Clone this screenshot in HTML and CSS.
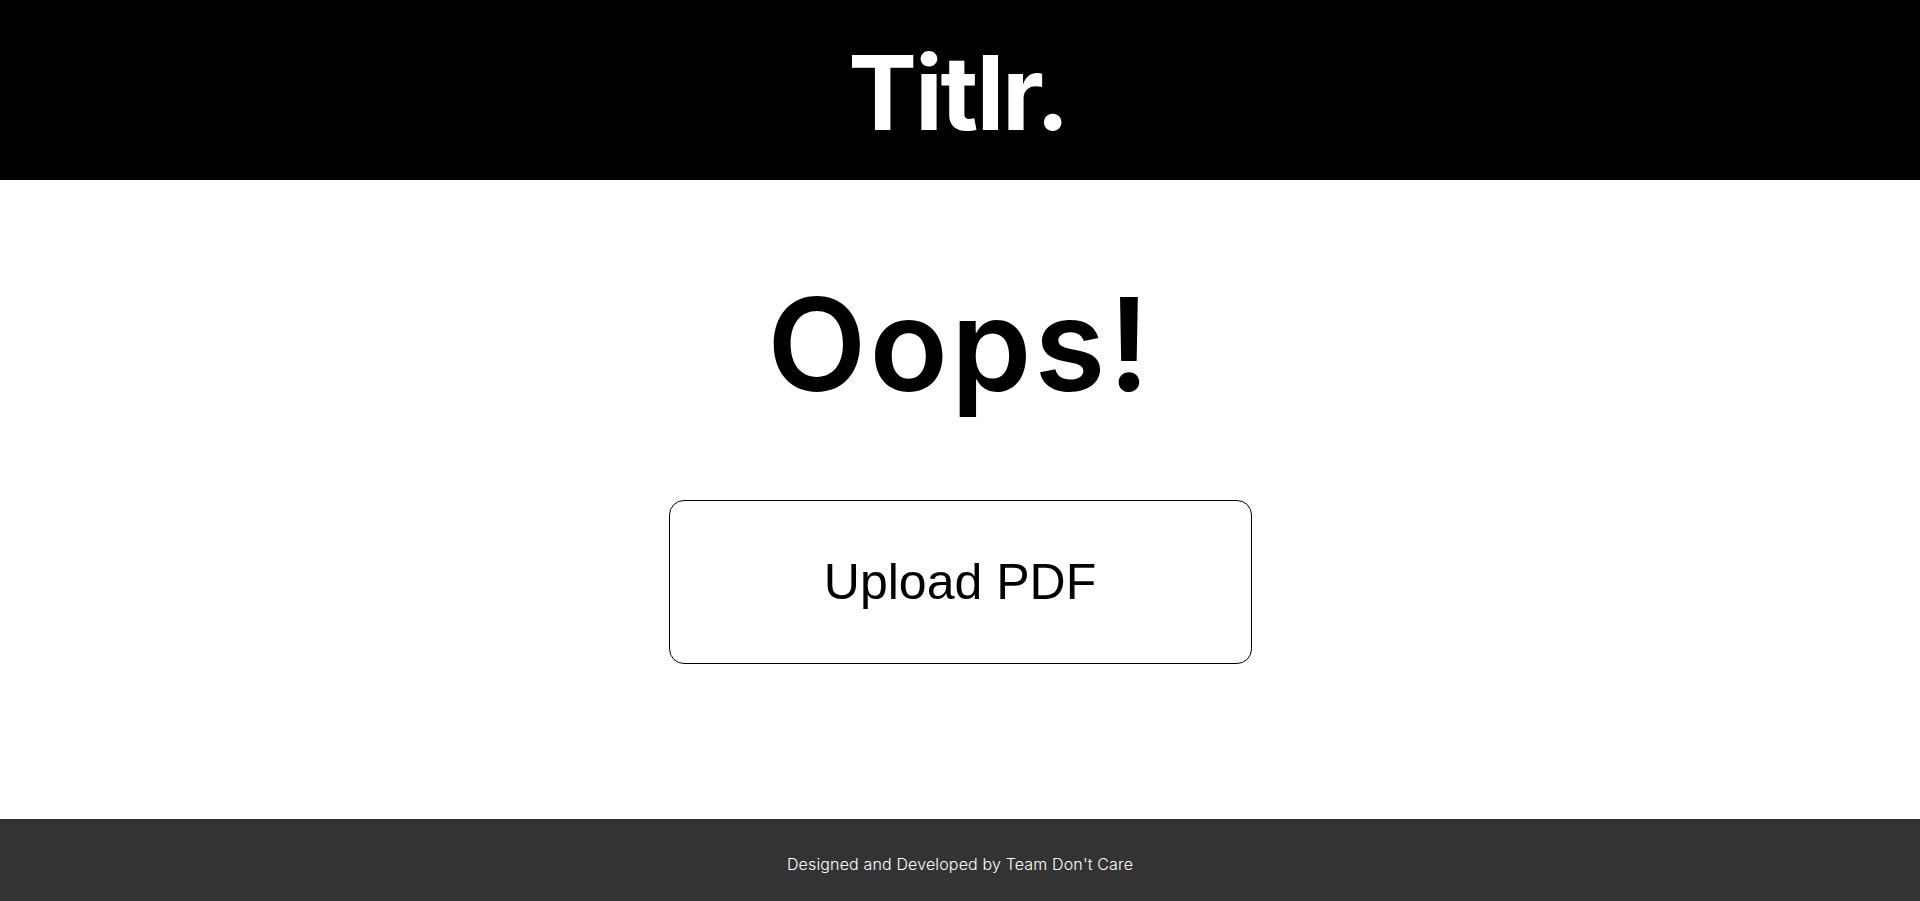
FILE: index.html
```html
<!DOCTYPE html>
<html lang="en">
<head>
<meta charset="utf-8">
<title>Titlr.</title>
<link rel="stylesheet" href="styles.css">
</head>
<body>
<div class="page">
  <header class="site-header">
    <div class="logo">Titlr.</div>
  </header>
  <main class="content">
    <h1 class="title">Oops!</h1>
    <button class="upload-btn" type="button">Upload PDF</button>
  </main>
  <footer class="site-footer">
    <p class="credit">Designed and Developed by Team Don't Care</p>
  </footer>
</div>
</body>
</html>
```

FILE: styles.css
```css
* {
  box-sizing: border-box;
}

html, body {
  margin: 0;
  padding: 0;
}

body {
  font-family: "Inter", "Liberation Sans", sans-serif;
  background: #ffffff;
  color: #000000;
}

.page {
  min-height: 100vh;
  display: flex;
  flex-direction: column;
}

.site-header {
  height: 180px;
  background: #000000;
  display: flex;
  justify-content: center;
  align-items: center;
}

.logo {
  color: #ffffff;
  font-family: "Inter", sans-serif;
  font-weight: 700;
  font-size: 103px;
  letter-spacing: -2.2px;
  line-height: 1;
  padding-top: 4px;
  padding-right: 4px;
}

.content {
  flex: 1;
  display: flex;
  flex-direction: column;
  align-items: center;
  padding-top: 100px;
}

.title {
  margin: 0;
  font-family: "Inter", sans-serif;
  font-weight: 600;
  font-size: 129px;
  line-height: 1;
  letter-spacing: 3px;
}

.upload-btn {
  margin-top: 91px;
  width: 583px;
  height: 164px;
  border: 1px solid #000000;
  border-radius: 15px;
  background: #ffffff;
  color: #000000;
  font-family: "Liberation Sans", Arial, sans-serif;
  font-size: 50px;
  display: flex;
  align-items: center;
  justify-content: center;
  padding: 0;
  cursor: pointer;
}

.site-footer {
  height: 82px;
  background: #333333;
  display: flex;
  justify-content: center;
  align-items: center;
}

.credit {
  margin: 0;
  padding-top: 8px;
  color: #ffffff;
  font-family: "Inter", sans-serif;
  font-weight: 300;
  font-size: 16px;
  letter-spacing: 0.15px;
}
```
